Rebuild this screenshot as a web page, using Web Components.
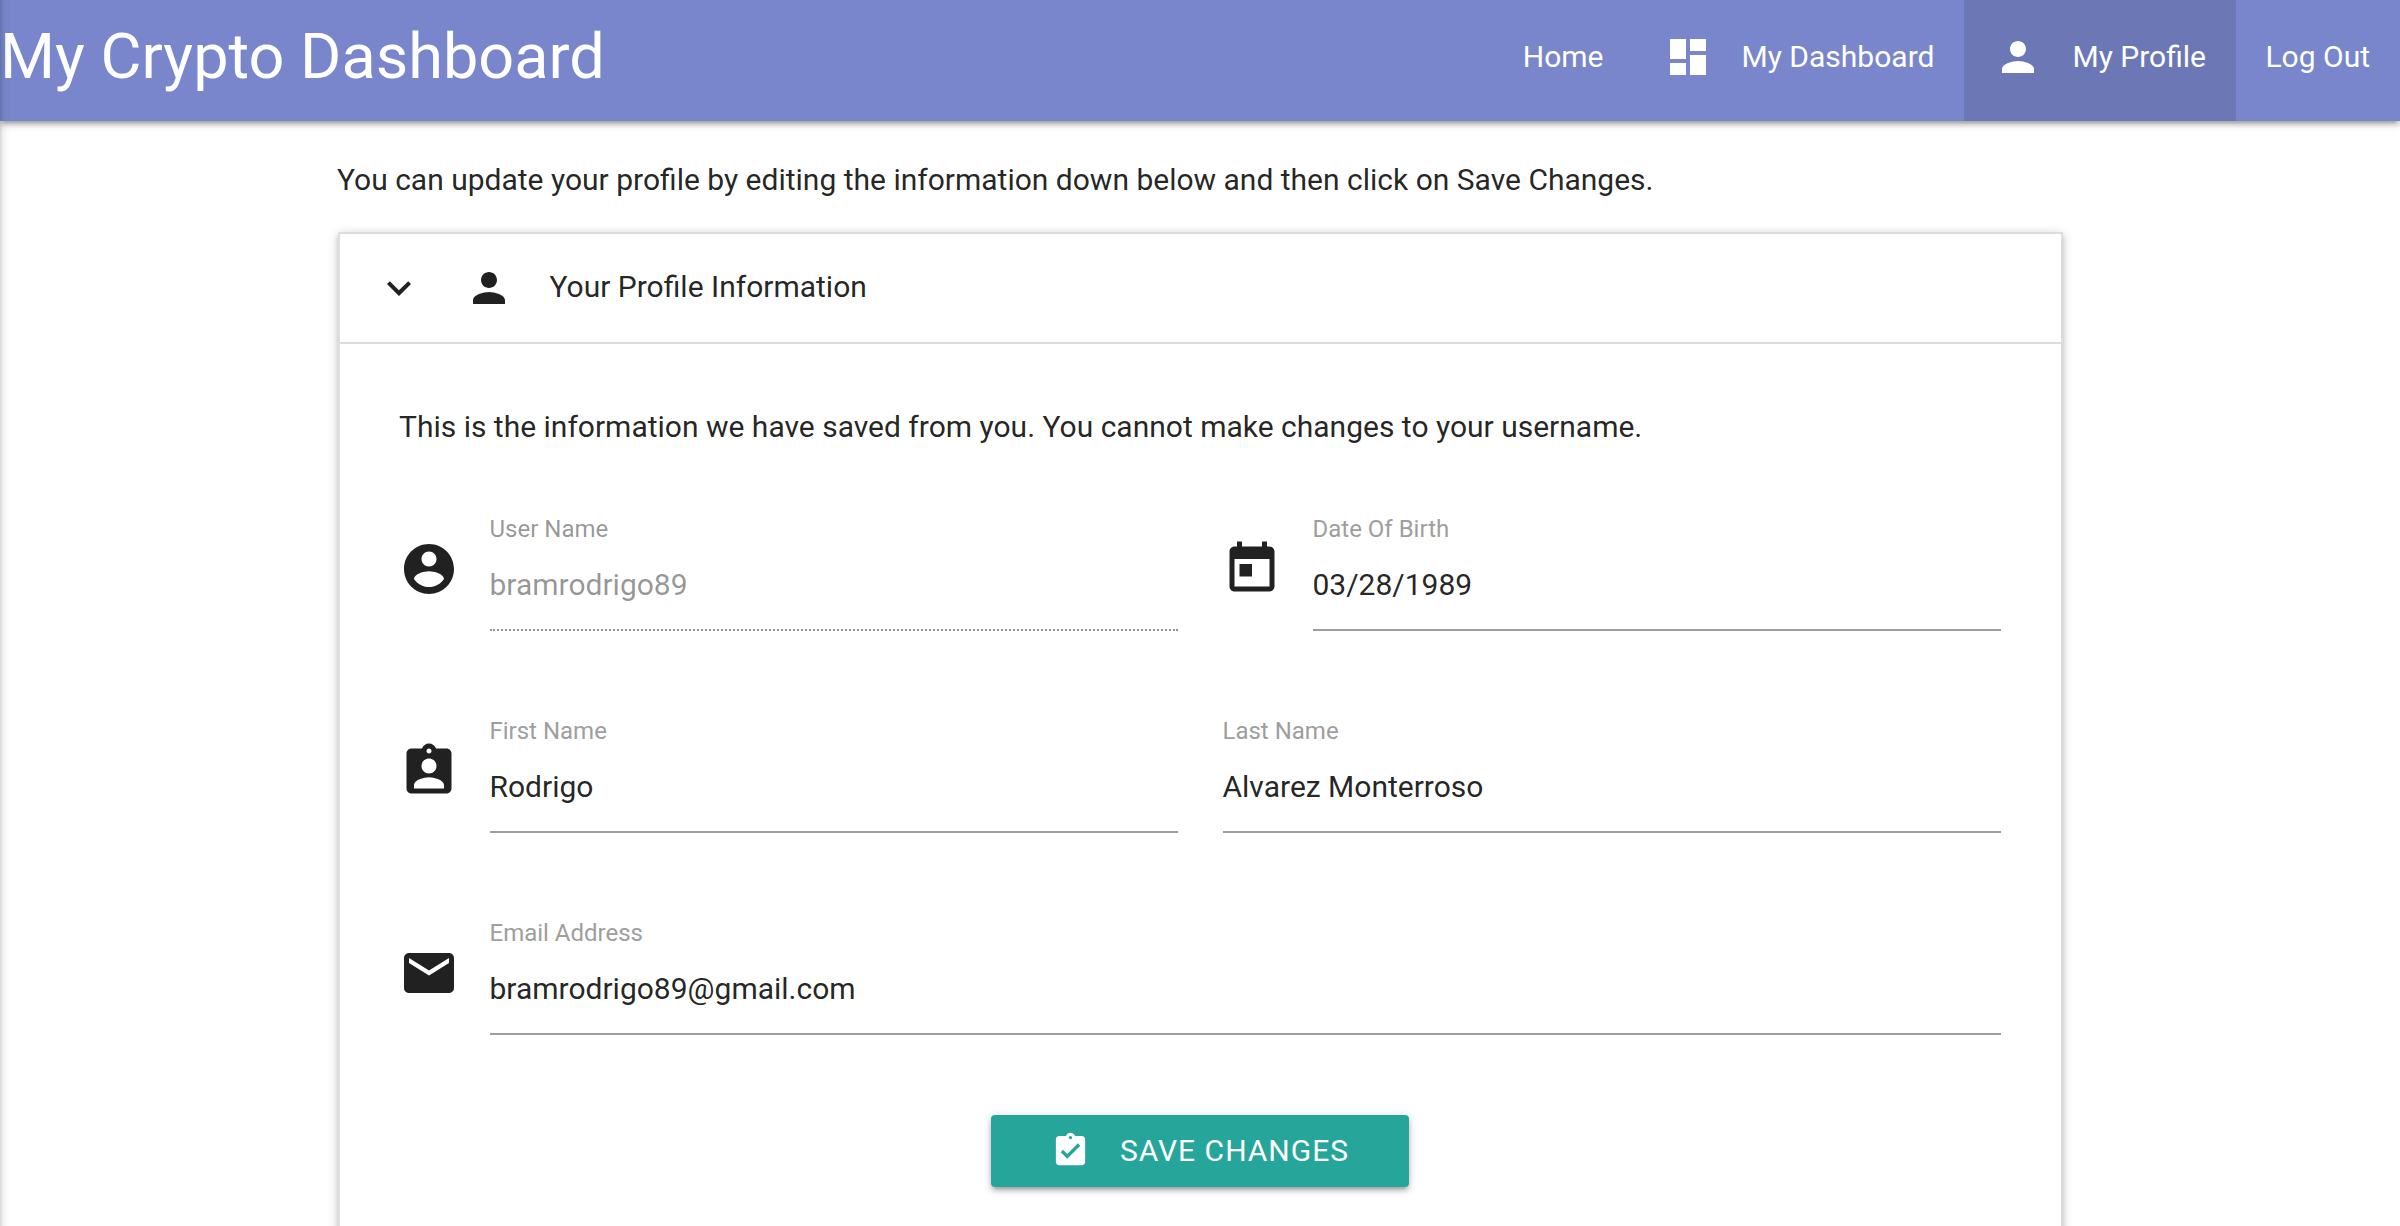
<!DOCTYPE html>
<html lang="en">
<head>
<meta charset="utf-8">
<title>My Crypto Dashboard</title>
<style>
html,body{margin:0;height:100%;overflow:hidden;background:#fff}
body{font-family:Roboto,sans-serif;font-size:30px;line-height:45px;color:rgba(0,0,0,.87)}
</style>
</head>
<body>
<crypto-app></crypto-app>
<script>
const ICONS = {
  dashboard: 'M3 13h8V3H3v10zm0 8h8v-6H3v6zm10 0h8V11h-8v10zm0-18v6h8V3h-8z',
  person: 'M12 12c2.21 0 4-1.79 4-4s-1.79-4-4-4-4 1.79-4 4 1.79 4 4 4zm0 2c-2.67 0-8 1.34-8 4v2h16v-2c0-2.66-5.33-4-8-4z',
  expand: 'M16.59 8.59L12 13.17 7.41 8.59 6 10l6 6 6-6z',
  account: 'M12 2C6.48 2 2 6.48 2 12s4.48 10 10 10 10-4.48 10-10S17.52 2 12 2zm0 3c1.66 0 3 1.34 3 3s-1.34 3-3 3-3-1.34-3-3 1.34-3 3-3zm0 14.2c-2.5 0-4.71-1.28-6-3.22.03-1.99 4-3.08 6-3.08 1.99 0 5.97 1.09 6 3.08-1.29 1.94-3.5 3.22-6 3.22z',
  today: 'M19 3h-1V1h-2v2H8V1H6v2H5c-1.11 0-1.99.9-1.99 2L3 19c0 1.1.89 2 2 2h14c1.1 0 2-.9 2-2V5c0-1.1-.9-2-2-2zm0 16H5V8h14v11zM7 10h5v5H7z',
  badge: 'M19 3h-4.18C14.4 1.84 13.3 1 12 1c-1.3 0-2.4.84-2.82 2H5c-1.1 0-2 .9-2 2v14c0 1.1.9 2 2 2h14c1.1 0 2-.9 2-2V5c0-1.1-.9-2-2-2zm-7 0c.55 0 1 .45 1 1s-.45 1-1 1-1-.45-1-1 .45-1 1-1zm0 4c1.66 0 3 1.34 3 3s-1.34 3-3 3-3-1.34-3-3 1.34-3 3-3zm6 12H6v-1.4c0-2 4-3.1 6-3.1s6 1.1 6 3.1V19z',
  email: 'M20 4H4c-1.1 0-1.99.9-1.99 2L2 18c0 1.1.9 2 2 2h16c1.1 0 2-.9 2-2V6c0-1.1-.9-2-2-2zm0 4l-8 5-8-5V6l8 5 8-5v2z',
  done: 'M19 3h-4.18C14.4 1.84 13.3 1 12 1c-1.3 0-2.4.84-2.82 2H5c-1.1 0-2 .9-2 2v14c0 1.1.9 2 2 2h14c1.1 0 2-.9 2-2V5c0-1.1-.9-2-2-2zm-7 0c.55 0 1 .45 1 1s-.45 1-1 1-1-.45-1-1 .45-1 1-1zm-2 14l-4-4 1.41-1.41L10 14.170l6.590-6.590L18 9l-8 8z'
};
const DEPTH = '0 4px 4px 0 rgba(0,0,0,.14),0 6px 2px -4px rgba(0,0,0,.12),0 2px 10px 0 rgba(0,0,0,.2)';
const define = (name, render) => customElements.define(name, class extends HTMLElement {
  constructor() { super(); this.attachShadow({mode: 'open'}); }
  connectedCallback() { this.shadowRoot.innerHTML = render(this); }
});

define('md-icon', el => `<style>
  :host{display:block;flex:none;width:var(--size,48px);height:var(--size,48px)}
  svg{display:block;width:100%;height:100%;fill:currentColor}</style>
  <svg viewBox="0 0 24 24"><path d="${ICONS[el.getAttribute('name')]}"/></svg>`);

define('nav-item', el => `<style>
  :host{display:flex;align-items:center;gap:30px;padding:0 30px 7px;white-space:nowrap}
  :host([active]){background:rgba(0,0,0,.1);min-width:212px;margin-right:-1px}
  span{padding-bottom:2px}</style>
  ${el.hasAttribute('icon') ? `<md-icon name="${el.getAttribute('icon')}"></md-icon>` : ''}<span><slot></slot></span>`);

define('nav-bar', () => `<style>
  :host{display:flex;justify-content:space-between;position:relative;height:121px;background:#7986cb;color:#fff;box-shadow:${DEPTH}}
  .brand{font-size:63px;line-height:114px;white-space:nowrap}
  nav{display:flex}</style>
  <div class="brand"><slot name="brand"></slot></div><nav><slot></slot></nav>`);

define('profile-panel', () => `<style>
  :host{display:block;box-sizing:border-box;border:2px solid #ddd;height:1035px;box-shadow:${DEPTH}}
  header{display:flex;align-items:center;height:108px;padding:0 30px;border-bottom:2px solid #ddd}
  header md-icon{margin:0 36.5px 0 5.5px}
  header div{padding-bottom:3px}
  section{padding:60px 60px 0}</style>
  <header><md-icon name="expand"></md-icon><md-icon name="person"></md-icon><div><slot name="title"></slot></div></header>
  <section><slot></slot></section>`);

define('form-row', () => `<style>:host{display:flex;gap:45px;height:132px;margin-bottom:70px}</style><slot></slot>`);

define('text-field', el => `<style>
  :host{display:flex;flex:1 1 0;min-width:0}
  md-icon{--size:60px;margin:30px 30.5px 0 -.5px}
  .f{flex:1;min-width:0}
  .l{box-sizing:border-box;height:30px;padding-top:5px;line-height:30px;font-size:24px;color:#9e9e9e}
  .v{height:90px;line-height:92px;border-bottom:2px solid #9e9e9e}
  :host([disabled]) .l,:host([disabled]) .v{color:rgba(0,0,0,.42)}
  :host([disabled]) .v{border-bottom:2px dotted rgba(0,0,0,.42)}</style>
  ${el.hasAttribute('icon') ? `<md-icon name="${el.getAttribute('icon')}"></md-icon>` : ''}
  <div class="f"><div class="l">${el.getAttribute('label')}</div><div class="v"><slot></slot></div></div>`);

define('save-button', () => `<style>
  :host{display:flex;justify-content:center}
  button{all:unset;display:flex;align-items:center;gap:30px;box-sizing:border-box;height:72px;padding:0 60px;background:#26a69a;color:#fff;border-radius:4px;letter-spacing:1px;text-transform:uppercase;box-shadow:${DEPTH}}
  span{padding-bottom:1px}
  md-icon{--size:39px;margin-bottom:1px}</style>
  <button><md-icon name="done"></md-icon><span><slot></slot></span></button>`);

define('edge-drawer', () => `<style>:host{position:fixed;top:-20px;bottom:-20px;left:-40px;width:40px;z-index:5;box-shadow:${DEPTH}}</style>`);

define('crypto-app', () => `<style>
  :host{display:block}
  main{width:1725px;margin:0 auto}
  p{margin:0 0 0 -.5px}
  .intro{padding:36px 0 30px}
  form-row:first-of-type{margin-top:60px}
  save-button{margin-top:70px}</style>
  <edge-drawer></edge-drawer>
  <nav-bar><span slot="brand">My Crypto Dashboard</span>
    <nav-item>Home</nav-item><nav-item icon="dashboard">My Dashboard</nav-item>
    <nav-item icon="person" active>My Profile</nav-item><nav-item>Log Out</nav-item></nav-bar>
  <main>
    <p class="intro">You can update your profile by editing the information down below and then click on Save Changes.</p>
    <profile-panel><span slot="title">Your Profile Information</span>
      <p>This is the information we have saved from you. You cannot make changes to your username.</p>
      <form-row><text-field icon="account" label="User Name" disabled>bramrodrigo89</text-field><text-field icon="today" label="Date Of Birth">03/28/1989</text-field></form-row>
      <form-row><text-field icon="badge" label="First Name">Rodrigo</text-field><text-field label="Last Name">Alvarez Monterroso</text-field></form-row>
      <form-row><text-field icon="email" label="Email Address">bramrodrigo89@gmail.com</text-field></form-row>
      <save-button>Save Changes</save-button>
    </profile-panel>
  </main>`);
</script>
</body>
</html>
